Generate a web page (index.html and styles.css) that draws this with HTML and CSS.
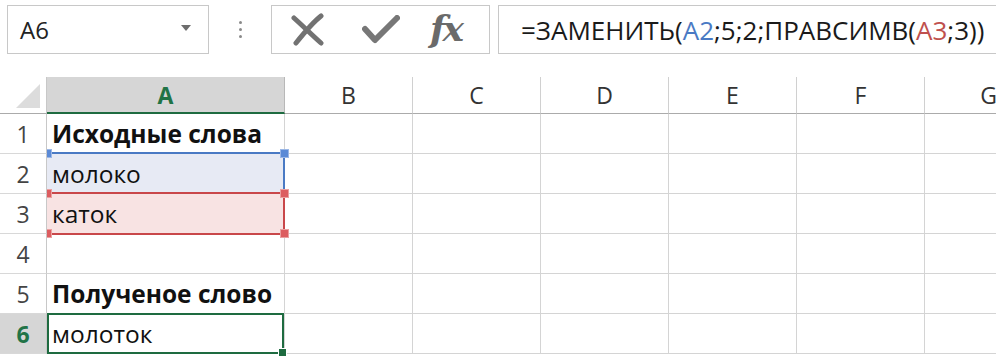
FILE: index.html
```html
<!DOCTYPE html>
<html lang="ru">
  <head>
    <meta charset="UTF-8" />
    <title>Excel</title>
    <link rel="stylesheet" href="styles.css">
  </head>
  <body class="body">
    <div class="bar">
      <div class="nameBox">
        <span>A6</span>
        <svg class="arrow" width="10" height="6" viewBox="0 0 10 6"><path d="M0 0 L10 0 L5 6 Z" fill="#6d6d6d"/></svg>
      </div>
      <div class="dots"><i></i><i></i><i></i></div>
      <div class="fxBox">
        <svg width="36" height="34" viewBox="0 0 36 34"><path d="M4 5 C 14 14, 22 22, 31 30 M31 3 C 22 10, 14 20, 6 30" stroke="#727272" stroke-width="5" fill="none" stroke-linecap="round"/></svg>
        <svg width="38" height="30" viewBox="0 0 38 30"><path d="M3 14 L13 25 L35 3" stroke="#777" stroke-width="6" fill="none" stroke-linecap="round" stroke-linejoin="round"/></svg>
        <span class="fx">fx</span>
      </div>
      <div class="formula">=ЗАМЕНИТЬ(<span class="blue">A2</span>;5;2;ПРАВСИМВ(<span class="red">A3</span>;3))</div>
    </div>

    <div class="sheet">
      <div class="corner"><svg width="24" height="24" viewBox="0 0 24 24"><path d="M24 0 L24 24 L0 24 Z" fill="#dcdcdc"/></svg></div>
      <div class="colHead active">A</div>
      <div class="colHead">B</div>
      <div class="colHead">C</div>
      <div class="colHead">D</div>
      <div class="colHead">E</div>
      <div class="colHead">F</div>
      <div class="colHead">G</div>

      <div class="rowHead">1</div>
      <div class="cell bold">Исходные слова</div>
      <div class="cell"></div><div class="cell"></div><div class="cell"></div><div class="cell"></div><div class="cell"></div><div class="cell"></div>

      <div class="rowHead">2</div>
      <div class="cell refBlue">молоко
        <div class="frame frameBlue"><b class="h tl"></b><b class="h tr"></b></div>
      </div>
      <div class="cell"></div><div class="cell"></div><div class="cell"></div><div class="cell"></div><div class="cell"></div><div class="cell"></div>

      <div class="rowHead">3</div>
      <div class="cell refRed">каток
        <div class="frame frameRed"><b class="h tl"></b><b class="h tr"></b><b class="h bl"></b><b class="h br"></b></div>
      </div>
      <div class="cell"></div><div class="cell"></div><div class="cell"></div><div class="cell"></div><div class="cell"></div><div class="cell"></div>

      <div class="rowHead">4</div>
      <div class="cell"></div>
      <div class="cell"></div><div class="cell"></div><div class="cell"></div><div class="cell"></div><div class="cell"></div><div class="cell"></div>

      <div class="rowHead">5</div>
      <div class="cell bold">Полученое слово</div>
      <div class="cell"></div><div class="cell"></div><div class="cell"></div><div class="cell"></div><div class="cell"></div><div class="cell"></div>

      <div class="rowHead active">6</div>
      <div class="cell">молоток
        <div class="frame frameGreen"><b class="h br"></b></div>
      </div>
      <div class="cell"></div><div class="cell"></div><div class="cell"></div><div class="cell"></div><div class="cell"></div><div class="cell"></div>
    </div>
  </body>
</html>
```

FILE: styles.css
```css
.body {
  margin: 0;
  width: 996px;
  height: 362px;
  overflow: hidden;
  background-color: #ffffff;
  font-family: "Open Sans", "Noto Sans", sans-serif;
  color: #1a1a1a;
}

.bar {
  display: flex;
  align-items: flex-start;
  padding: 5px 0 0 7px;
  height: 77px;
  box-sizing: border-box;
}
.nameBox {
  flex-shrink: 0;
  box-sizing: border-box;
  width: 202px;
  height: 49px;
  border: 1px solid #c8c8c8;
  display: flex;
  align-items: center;
  justify-content: space-between;
  padding: 0 17px 0 12px;
  font-size: 24px;
  color: #222;
}
.nameBox .arrow {
  margin-top: -4px;
}
.dots {
  flex-shrink: 0;
  width: 62px;
  height: 49px;
  display: flex;
  flex-direction: column;
  align-items: center;
  justify-content: center;
  gap: 4px;
}
.dots i {
  width: 3px;
  height: 3px;
  border-radius: 50%;
  background-color: #8a8a8a;
}
.fxBox {
  flex-shrink: 0;
  box-sizing: border-box;
  width: 219px;
  height: 49px;
  border: 1px solid #c8c8c8;
  display: flex;
  align-items: center;
  padding: 0 0 0 18px;
  gap: 36px;
}
.fx {
  font-family: "DejaVu Serif", "Liberation Serif", serif;
  font-style: italic;
  font-weight: bold;
  font-size: 36px;
  color: #6a6a6a;
  margin-left: -6px;
  margin-top: -4px;
  letter-spacing: -3px;
}
.formula {
  flex: 1;
  box-sizing: border-box;
  margin-left: 8px;
  height: 49px;
  border: 1px solid #c8c8c8;
  border-right: none;
  display: flex;
  align-items: center;
  padding-left: 22px;
  font-size: 26px;
  color: #1a1a1a;
  white-space: nowrap;
  overflow: hidden;
}
.blue {
  color: #4a7ac4;
}
.red {
  color: #c0504d;
}

.sheet {
  display: grid;
  grid-template-columns: 47px 238px 128px 128px 128px 128px 128px 128px;
  grid-template-rows: 37px repeat(6, 40px);
}
.corner {
  border-right: 1px solid #c8c8c8;
  border-bottom: 1px solid #ababab;
  display: flex;
  align-items: flex-end;
  justify-content: flex-end;
  padding: 0 6px 5px 0;
  position: relative;
  z-index: 2;
  background-color: #ffffff;
}
.colHead {
  border-right: 1px solid #d0d0d0;
  border-bottom: 1px solid #ababab;
  display: flex;
  align-items: center;
  justify-content: center;
  font-size: 23px;
  color: #333;
}
.colHead.active {
  background-color: #d6d6d6;
  border-bottom: 2px solid #1e6b40;
  border-right: 1px solid #b8b8b8;
  color: #217346;
  font-weight: bold;
}
.rowHead {
  border-right: 1px solid #c8c8c8;
  border-bottom: 1px solid #d8d8d8;
  display: flex;
  align-items: center;
  justify-content: center;
  font-size: 23px;
  color: #444;
  background-color: #ffffff;
  position: relative;
  z-index: 2;
}
.rowHead.active {
  background-color: #d6d6d6;
  color: #217346;
  font-weight: bold;
}
.cell {
  border-right: 1px solid #d4d4d4;
  border-bottom: 1px solid #d4d4d4;
  display: flex;
  align-items: center;
  padding-left: 5px;
  font-size: 24.5px;
  color: #111;
  position: relative;
}
.bold {
  font-weight: bold;
}
.refBlue {
  background-color: #e7eaf4;
}
.refRed {
  background-color: #f8e3e3;
}

.frame {
  position: absolute;
  left: 2px;
  top: -2px;
  right: -1px;
  bottom: -2px;
  box-sizing: border-box;
  z-index: 1;
}
.frameBlue {
  border: 2px solid #4a7ac4;
  border-bottom: none;
  border-left: none;
  bottom: 0;
}
.frameRed {
  border: 2px solid #c9474a;
  border-left: none;
}
.frameGreen {
  border: 2px solid #1e6b40;
  left: 0;
  top: -1px;
  right: 0;
  bottom: -1px;
}
.h {
  position: absolute;
  width: 9px;
  height: 9px;
  box-sizing: border-box;
}
.frameBlue .h {
  background-color: #5b8ad6;
  border: 1px solid #9bb7e6;
}
.frameRed .h {
  background-color: #dc5d60;
  border: 1px solid #eaa0a0;
}
.frameGreen .h {
  background-color: #1e6b40;
  border: 1px solid #ffffff;
  right: -5px;
  bottom: -5px;
}
.tl { left: -6px; top: -5px; }
.tr { right: -6px; top: -5px; }
.bl { left: -6px; bottom: -5px; }
.br { right: -6px; bottom: -5px; }
```
